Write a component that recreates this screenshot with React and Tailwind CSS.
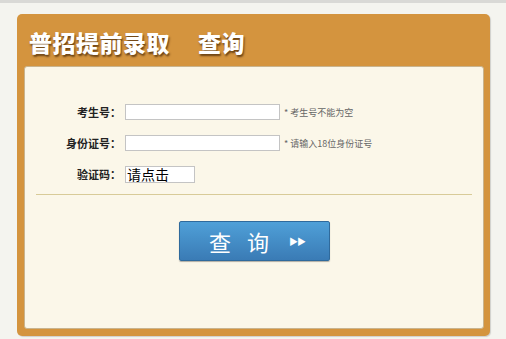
import React from "react";

const font = { fontFamily: '"Noto Sans CJK SC", "Liberation Sans", sans-serif' };

const Row = ({ label, hint }) => (
  <div className="flex items-center h-[16px]">
    <div className="w-[96px] text-right text-[11px] font-bold text-[#222] leading-none">{label}</div>
    <input
      type="text"
      className="ml-[4px] w-[155px] h-[16px] bg-white border border-[#c4c4c4] outline-none"
    />
    {hint && <span className="ml-[4px] text-[9px] text-[#666] leading-none">{hint}</span>}
  </div>
);

export default function App() {
  return (
    <div className="w-[506px] h-[339px] bg-[#f4f4ef] border-t-[3px] border-[#d9d9d6] overflow-hidden" style={font}>
      <div className="ml-[17px] mt-[11px] w-[473px] h-[322px] bg-[#d4943e] rounded-[5px] flex flex-col shadow-[1px_1px_1px_rgba(0,0,0,0.15)]">
        <div className="h-[52px] flex items-center pl-[12px] pt-[4px]">
          <h1 className="text-[23px] font-black text-white leading-none tracking-[0.5px] [text-shadow:1px_2px_2px_rgba(60,30,0,0.7)]">
            普招提前录取<span className="ml-[28px]">查询</span>
          </h1>
        </div>
        <div className="ml-[7px] mr-[6px] mb-[7px] flex-1 bg-[#fbf7e9] rounded-[3px] border border-[#c9b48e]">
          <div className="pt-[37px] flex flex-col gap-[15px]">
            <Row label="考生号：" hint="* 考生号不能为空" />
            <Row label="身份证号：" hint="* 请输入18位身份证号" />
            <div className="flex items-center h-[16px]">
              <div className="w-[96px] text-right text-[11px] font-bold text-[#222] leading-none">验证码：</div>
              <div className="ml-[4px] w-[70px] h-[17px] bg-white border border-[#c4c4c4] text-[14px] leading-[15px] text-black pl-[1px]">
                请点击
              </div>
            </div>
          </div>
          <div className="mt-[12px] mx-[11px] h-px bg-[#d8cb98]" />
          <div className="flex justify-center mt-[26px]">
            <button className="w-[151px] h-[40px] rounded-[2px] bg-gradient-to-b from-[#4fa0d8] to-[#3a7bb5] border border-[#2f6a9c] text-white flex items-center justify-center shadow-[0_1px_1px_rgba(0,0,0,0.3)]">
              <span className="text-[22px] leading-none tracking-[16px] ml-[6px]">查询</span>
              <span className="ml-[4px] text-[9px] leading-none tracking-[-1px]">▶▶</span>
            </button>
          </div>
        </div>
      </div>
    </div>
  );
}
